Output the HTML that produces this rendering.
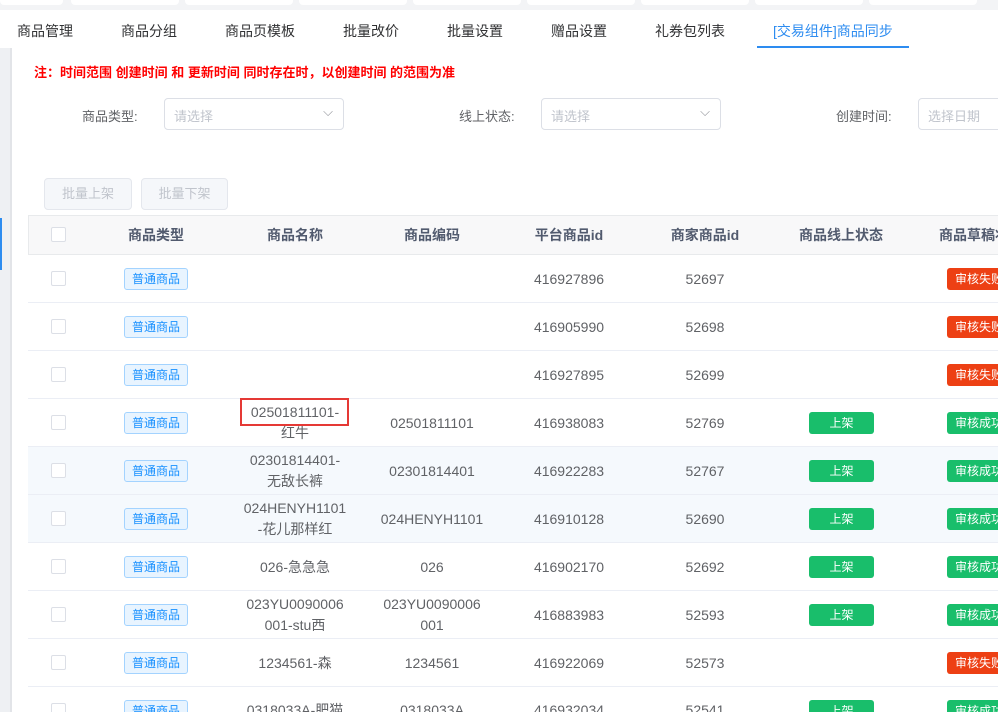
<!DOCTYPE html>
<html><head><meta charset="utf-8"><style>
*{box-sizing:border-box;margin:0;padding:0}
html,body{width:998px;height:712px;overflow:hidden}
body{background:#f3f4f6;font-family:"Liberation Sans","Noto Sans CJK SC",sans-serif;position:relative;color:#606266}
.a{position:absolute}
.card{position:absolute;top:0;height:5px;background:#fff;border-radius:0 0 4px 4px}
.tab{position:absolute;top:21px;font-size:14px;color:#303133}
.sel{position:absolute;height:32px;border:1px solid #dcdfe6;border-radius:4px;background:#fff;font-size:13px;color:#c0c4cc;padding:7px 9px}
.lbl{position:absolute;font-size:13px;color:#606266}
.btn{position:absolute;top:178px;height:32px;border:1px solid #e4e7ed;border-radius:4px;background:#f5f7fa;color:#c0c4cc;font-size:13px;text-align:center;line-height:30px}
.row{position:absolute;left:28px;width:980px;height:48px;border-bottom:1px solid #ebeef5;background:#fff}
.cb{position:absolute;left:23px;width:15px;height:15px;border:1px solid #dcdfe6;border-radius:2px;background:#fff;top:16px}
.c{position:absolute;top:0;height:48px;display:flex;align-items:center;justify-content:center;text-align:center;font-size:14px;color:#606266;line-height:21px}
.h{font-weight:bold;color:#515a6e;height:40px}
.tg{border:1px solid #a3d3ff;background:#e8f4ff;color:#1890ff;font-size:12px;height:22px;line-height:20px;padding:0 7px;border-radius:3px}
.g{background:#19be6b;color:#fff;font-size:12px;height:22px;line-height:22px;width:65px;border-radius:3px}
.r{background:#ed4014;color:#fff;font-size:12px;height:22px;line-height:22px;width:65px;border-radius:3px;text-align:left;padding-left:8px}
.gs{background:#19be6b;color:#fff;font-size:12px;height:22px;line-height:22px;width:65px;border-radius:3px;text-align:left;padding-left:8px}
</style></head><body>
<div class="card" style="left:0;width:63px"></div>
<div class="card" style="left:71px;width:108px"></div>
<div class="card" style="left:185px;width:108px"></div>
<div class="card" style="left:299px;width:108px"></div>
<div class="card" style="left:413px;width:108px"></div>
<div class="card" style="left:527px;width:108px"></div>
<div class="card" style="left:641px;width:108px"></div>
<div class="card" style="left:755px;width:108px"></div>
<div class="card" style="left:869px;width:108px"></div>
<div class="a" style="left:0;top:10px;width:998px;height:38px;background:#fff"></div>
<div class="tab" style="left:17px">商品管理</div>
<div class="tab" style="left:121px">商品分组</div>
<div class="tab" style="left:225px">商品页模板</div>
<div class="tab" style="left:343px">批量改价</div>
<div class="tab" style="left:447px">批量设置</div>
<div class="tab" style="left:551px">赠品设置</div>
<div class="tab" style="left:655px">礼券包列表</div>
<div class="tab" style="left:773px;color:#2d8cf0">[交易组件]商品同步</div>
<div class="a" style="left:757px;top:46px;width:152px;height:2px;background:#2d8cf0"></div>
<div class="a" style="left:0;top:48px;width:10px;height:664px;background:#eef0f3"></div>
<div class="a" style="left:10px;top:48px;width:2px;height:664px;background:#e2e4e8"></div>
<div class="a" style="left:0;top:218px;width:2px;height:52px;background:#2d8cf0"></div>
<div class="a" style="left:12px;top:48px;width:986px;height:664px;background:#fff"></div>
<div class="a" style="left:34px;top:62px;font-size:13px;font-weight:bold;color:#f00">注：时间范围 创建时间 和 更新时间 同时存在时，以创建时间 的范围为准</div>
<div class="lbl" style="left:82px;top:106px">商品类型:</div>
<div class="sel" style="left:164px;top:98px;width:180px">请选择<span style="position:absolute;right:10px;top:5px;color:#909399">⌵</span></div>
<div class="lbl" style="left:459px;top:106px">线上状态:</div>
<div class="sel" style="left:541px;top:98px;width:180px">请选择<span style="position:absolute;right:10px;top:5px;color:#909399">⌵</span></div>
<div class="lbl" style="left:836px;top:106px">创建时间:</div>
<div class="sel" style="left:918px;top:98px;width:100px">选择日期</div>
<div class="btn" style="left:44px;width:88px">批量上架</div>
<div class="btn" style="left:141px;width:87px">批量下架</div>
<div class="a" style="left:28px;top:215px;width:980px;height:40px;background:#f8f8f9;border:1px solid #e8eaec"></div>
<div class="a" style="left:28px;top:215px;width:1px;height:500px;background:#e8eaec"></div>
<div class="row" style="top:215px;height:40px;background:transparent;border:none">
<div class="cb" style="top:12px"></div>
<div class="c h" style="left:68px;width:120px">商品类型</div>
<div class="c h" style="left:207px;width:120px">商品名称</div>
<div class="c h" style="left:344px;width:120px">商品编码</div>
<div class="c h" style="left:481px;width:120px">平台商品id</div>
<div class="c h" style="left:617px;width:120px">商家商品id</div>
<div class="c h" style="left:753px;width:120px">商品线上状态</div>
<div class="c h" style="left:890px;width:120px;justify-content:flex-start;padding-left:21px;white-space:nowrap">商品草稿状态</div>
</div>

<div class="row" style="top:255px"><div class="cb"></div><div class="c" style="left:68px;width:120px"><span class="tg">普通商品</span></div><div class="c" style="left:481px;width:120px">416927896</div><div class="c" style="left:617px;width:120px">52697</div><div class="c" style="left:919px;width:80px;justify-content:flex-start"><span class="r">审核失败</span></div></div>
<div class="row" style="top:303px"><div class="cb"></div><div class="c" style="left:68px;width:120px"><span class="tg">普通商品</span></div><div class="c" style="left:481px;width:120px">416905990</div><div class="c" style="left:617px;width:120px">52698</div><div class="c" style="left:919px;width:80px;justify-content:flex-start"><span class="r">审核失败</span></div></div>
<div class="row" style="top:351px"><div class="cb"></div><div class="c" style="left:68px;width:120px"><span class="tg">普通商品</span></div><div class="c" style="left:481px;width:120px">416927895</div><div class="c" style="left:617px;width:120px">52699</div><div class="c" style="left:919px;width:80px;justify-content:flex-start"><span class="r">审核失败</span></div></div>
<div class="row" style="top:399px"><div class="cb"></div><div class="c" style="left:68px;width:120px"><span class="tg">普通商品</span></div><div class="c" style="left:207px;width:120px">02501811101-<br>红牛</div><div class="c" style="left:344px;width:120px">02501811101</div><div class="c" style="left:481px;width:120px">416938083</div><div class="c" style="left:617px;width:120px">52769</div><div class="c" style="left:781px;width:65px"><span class="g">上架</span></div><div class="c" style="left:919px;width:80px;justify-content:flex-start"><span class="gs">审核成功</span></div></div>
<div class="row" style="top:447px;background:#f5f9fd"><div class="cb"></div><div class="c" style="left:68px;width:120px"><span class="tg">普通商品</span></div><div class="c" style="left:207px;width:120px">02301814401-<br>无敌长裤</div><div class="c" style="left:344px;width:120px">02301814401</div><div class="c" style="left:481px;width:120px">416922283</div><div class="c" style="left:617px;width:120px">52767</div><div class="c" style="left:781px;width:65px"><span class="g">上架</span></div><div class="c" style="left:919px;width:80px;justify-content:flex-start"><span class="gs">审核成功</span></div></div>
<div class="row" style="top:495px;background:#f5f9fd"><div class="cb"></div><div class="c" style="left:68px;width:120px"><span class="tg">普通商品</span></div><div class="c" style="left:207px;width:120px">024HENYH1101<br>-花儿那样红</div><div class="c" style="left:344px;width:120px">024HENYH1101</div><div class="c" style="left:481px;width:120px">416910128</div><div class="c" style="left:617px;width:120px">52690</div><div class="c" style="left:781px;width:65px"><span class="g">上架</span></div><div class="c" style="left:919px;width:80px;justify-content:flex-start"><span class="gs">审核成功</span></div></div>
<div class="row" style="top:543px"><div class="cb"></div><div class="c" style="left:68px;width:120px"><span class="tg">普通商品</span></div><div class="c" style="left:207px;width:120px">026-急急急</div><div class="c" style="left:344px;width:120px">026</div><div class="c" style="left:481px;width:120px">416902170</div><div class="c" style="left:617px;width:120px">52692</div><div class="c" style="left:781px;width:65px"><span class="g">上架</span></div><div class="c" style="left:919px;width:80px;justify-content:flex-start"><span class="gs">审核成功</span></div></div>
<div class="row" style="top:591px"><div class="cb"></div><div class="c" style="left:68px;width:120px"><span class="tg">普通商品</span></div><div class="c" style="left:207px;width:120px">023YU0090006<br>001-stu西</div><div class="c" style="left:344px;width:120px">023YU0090006<br>001</div><div class="c" style="left:481px;width:120px">416883983</div><div class="c" style="left:617px;width:120px">52593</div><div class="c" style="left:781px;width:65px"><span class="g">上架</span></div><div class="c" style="left:919px;width:80px;justify-content:flex-start"><span class="gs">审核成功</span></div></div>
<div class="row" style="top:639px"><div class="cb"></div><div class="c" style="left:68px;width:120px"><span class="tg">普通商品</span></div><div class="c" style="left:207px;width:120px">1234561-森</div><div class="c" style="left:344px;width:120px">1234561</div><div class="c" style="left:481px;width:120px">416922069</div><div class="c" style="left:617px;width:120px">52573</div><div class="c" style="left:919px;width:80px;justify-content:flex-start"><span class="r">审核失败</span></div></div>
<div class="row" style="top:687px"><div class="cb"></div><div class="c" style="left:68px;width:120px;align-items:flex-start;padding-top:13px"><span class="tg">普通商品</span></div><div class="c" style="left:207px;width:120px;align-items:flex-start;padding-top:13px">0318033A-肥猫</div><div class="c" style="left:344px;width:120px;align-items:flex-start;padding-top:13px">0318033A</div><div class="c" style="left:481px;width:120px;align-items:flex-start;padding-top:13px">416932034</div><div class="c" style="left:617px;width:120px;align-items:flex-start;padding-top:13px">52541</div><div class="c" style="left:781px;width:65px;align-items:flex-start;padding-top:13px"><span class="g">上架</span></div><div class="c" style="left:919px;width:80px;justify-content:flex-start;align-items:flex-start;padding-top:13px"><span class="gs">审核成功</span></div></div>
<div class="a" style="left:240px;top:398px;width:109px;height:28px;border:2px solid #e53935"></div>
</body></html>
